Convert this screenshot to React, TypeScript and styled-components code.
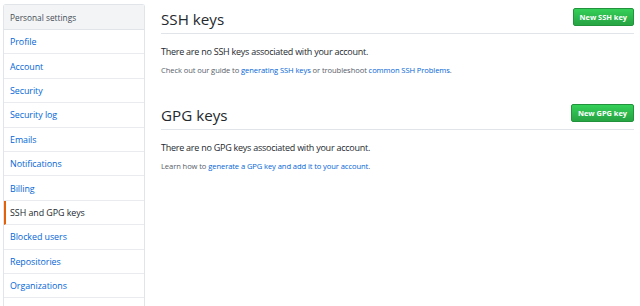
import styled, { createGlobalStyle } from "styled-components";

const GlobalStyle = createGlobalStyle`
  body {
    margin: 0;
    background: #fff;
    font-family: "Open Sans", "Noto Sans", Arial, sans-serif;
    color: #24292e;
  }
`;

const Page = styled.div`
  display: flex;
  align-items: flex-start;
  gap: 16px;
  padding: 4px 6px 0 3px;
`;

const Menu = styled.nav`
  width: 142px;
  flex-shrink: 0;
  padding-bottom: 12px;
  border: 1px solid #e1e4e8;
  border-bottom: none;
  border-radius: 3px 3px 0 0;
  box-sizing: border-box;
`;

const MenuHeading = styled.div`
  height: 25px;
  display: flex;
  align-items: center;
  padding-left: 6px;
  background: #f3f4f6;
  border-bottom: 1px solid #e1e4e8;
  box-sizing: border-box;
  font-size: 8.3px;
  color: #444d56;
`;

const MenuItem = styled.a<{ $active?: boolean }>`
  height: 24.4px;
  display: flex;
  align-items: center;
  padding-left: ${(p) => (p.$active ? "4px" : "6px")};
  border-bottom: 1px solid #e9ebee;
  border-left: ${(p) => (p.$active ? "2px solid #e36209" : "none")};
  box-sizing: border-box;
  font-size: 8.9px;
  letter-spacing: -0.05px;
  color: ${(p) => (p.$active ? "#24292e" : "#0366d6")};
  text-decoration: none;
`;

const Main = styled.main`
  flex: 1;
  min-width: 0;
`;

const Subhead = styled.div<{ $spaced?: boolean }>`
  display: flex;
  align-items: center;
  justify-content: space-between;
  height: 30px;
  margin-top: ${(p) => (p.$spaced ? "24px" : "0")};
  border-bottom: 1px solid #e1e4e8;
  box-sizing: border-box;
`;

const Heading = styled.h2`
  margin: 0;
  font-size: 15.2px;
  font-weight: 400;
  color: #24292e;
`;

const GreenButton = styled.button`
  height: 18px;
  padding: 0 6px;
  margin-bottom: 3px;
  border: 1px solid #22933c;
  border-radius: 2px;
  background: linear-gradient(#34d058, #28a745 90%);
  color: #fff;
  font-family: inherit;
  font-size: 7.4px;
  font-weight: 700;
  cursor: pointer;
`;

const Blurb = styled.p`
  margin: 11px 0 0;
  line-height: 14px;
  font-size: 9px;
  letter-spacing: -0.25px;
  color: #24292e;
`;

const Note = styled.p`
  margin: 5px 0 0;
  line-height: 12px;
  font-size: 7.6px;
  letter-spacing: -0.1px;
  color: #586069;

  a {
    color: #0366d6;
    text-decoration: none;
  }
`;

const items = [
  "Profile",
  "Account",
  "Security",
  "Security log",
  "Emails",
  "Notifications",
  "Billing",
  "SSH and GPG keys",
  "Blocked users",
  "Repositories",
  "Organizations",
];

const App = () => {
  return (
    <>
      <GlobalStyle />
      <Page>
        <Menu>
          <MenuHeading>Personal settings</MenuHeading>
          {items.map((item) => (
            <MenuItem key={item} href="#" $active={item === "SSH and GPG keys"}>
              {item}
            </MenuItem>
          ))}
        </Menu>

        <Main>
          <Subhead>
            <Heading>SSH keys</Heading>
            <GreenButton>New SSH key</GreenButton>
          </Subhead>
          <Blurb>There are no SSH keys associated with your account.</Blurb>
          <Note>
            Check out our guide to <a href="#">generating SSH keys</a> or
            troubleshoot <a href="#">common SSH Problems</a>.
          </Note>

          <Subhead $spaced>
            <Heading>GPG keys</Heading>
            <GreenButton>New GPG key</GreenButton>
          </Subhead>
          <Blurb>There are no GPG keys associated with your account.</Blurb>
          <Note>
            Learn how to{" "}
            <a href="#">generate a GPG key and add it to your account</a>.
          </Note>
        </Main>
      </Page>
    </>
  );
};

export default App;
